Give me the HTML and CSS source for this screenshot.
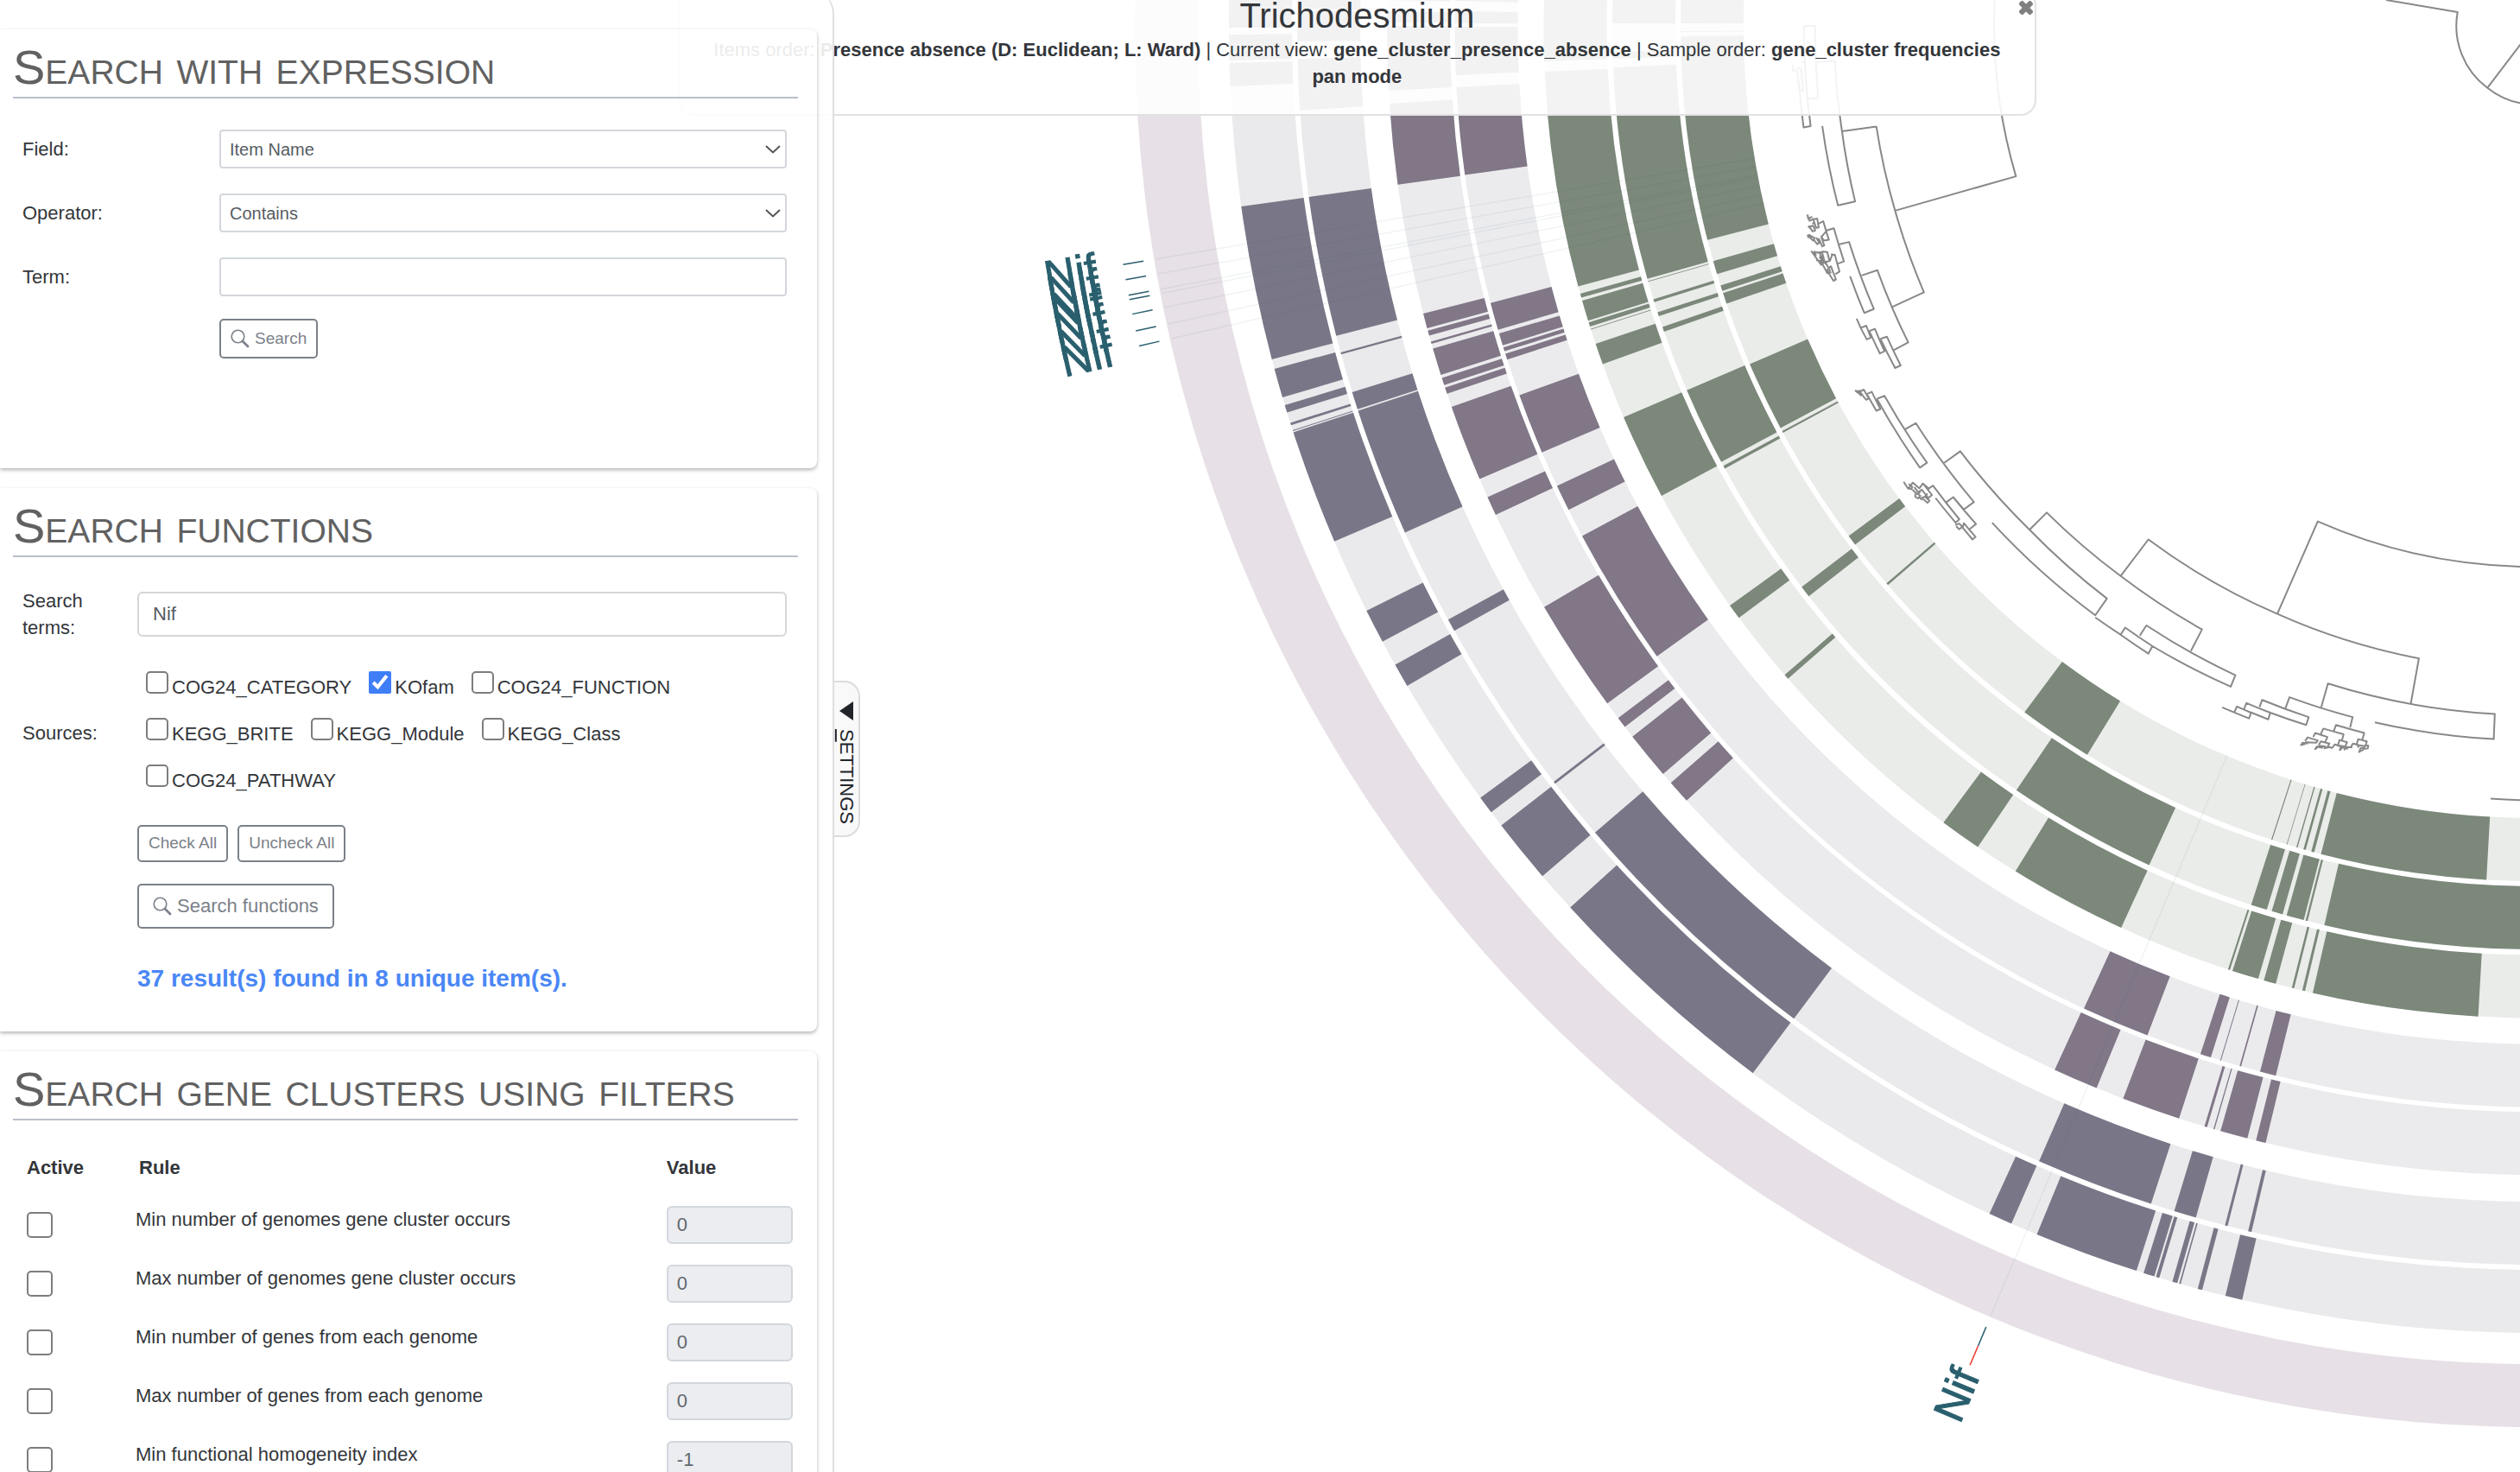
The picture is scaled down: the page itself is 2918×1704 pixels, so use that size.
FILE: index.html
```html
<!DOCTYPE html>
<html lang="en">
<head>
<meta charset="utf-8">
<meta name="viewport" content="width=device-width, initial-scale=1">
<title>Trichodesmium</title>
<link rel="stylesheet" href="styles.css">
</head>
<body>
<main class="viewer">
  <svg class="plot" id="plot" viewBox="0 0 2918 1704" preserveAspectRatio="xMinYMin slice" role="img" aria-label="Pangenome of Trichodesmium"></svg>

  <header class="title-panel">
    <button class="close" type="button" aria-label="Close title panel">
      <svg viewBox="0 0 20 20" width="20" height="20"><path d="M3 5 5 3a1 1 0 0 1 1 0l4 4 4-4a1 1 0 0 1 1 0l2 2a1 1 0 0 1 0 1l-4 4 4 4a1 1 0 0 1 0 1l-2 2a1 1 0 0 1-1 0l-4-4-4 4a1 1 0 0 1-1 0l-2-2a1 1 0 0 1 0-1l4-4-4-4a1 1 0 0 1 0-1z" fill="#808080" stroke="#808080" stroke-width="2"/></svg>
    </button>
    <h1>Trichodesmium</h1>
    <p>Items order: <b>Presence absence (D: Euclidean; L: Ward)</b> | Current view: <b>gene_cluster_presence_absence</b> | Sample order: <b>gene_cluster frequencies pan mode</b></p>
  </header>

  <aside class="sidebar">
    <section class="card">
      <h2>Search with expression</h2>
      <form class="form form-expression">
        <label for="field">Field:</label>
        <div class="select">
          <select id="field"><option>Item Name</option></select>
          <svg class="chevron" viewBox="0 0 18 10"><path d="M1 1l8 7.500 8-7.500" fill="none" stroke="#555" stroke-width="2"/></svg>
        </div>
        <label for="operator">Operator:</label>
        <div class="select">
          <select id="operator"><option>Contains</option></select>
          <svg class="chevron" viewBox="0 0 18 10"><path d="M1 1l8 7.500 8-7.500" fill="none" stroke="#555" stroke-width="2"/></svg>
        </div>
        <label for="term">Term:</label>
        <input class="text-small" id="term" type="text">
        <div class="actions">
          <button class="btn btn-search" type="button">
            <svg class="lens" viewBox="0 0 22 22"><circle cx="8.500" cy="8.500" r="7.300" fill="none" stroke="currentColor" stroke-width="1.600"/><path d="M14 14l6 6" stroke="currentColor" stroke-width="2.800" stroke-linecap="round"/></svg>
            Search
          </button>
        </div>
      </form>
    </section>

    <section class="card">
      <h2>Search functions</h2>
      <form class="form form-functions">
        <label for="terms">Search terms:</label>
        <input class="text-large" id="terms" type="text" value="Nif">
        <span id="sources-label">Sources:</span>
        <div class="sources" role="group" aria-labelledby="sources-label">
          <label><input type="checkbox"><span>COG24_CATEGORY</span></label>
          <label><input type="checkbox" checked><span>KOfam</span></label>
          <label><input type="checkbox"><span>COG24_FUNCTION</span></label>
          <label><input type="checkbox"><span>KEGG_BRITE</span></label>
          <label><input type="checkbox"><span>KEGG_Module</span></label>
          <label><input type="checkbox"><span>KEGG_Class</span></label>
          <label><input type="checkbox"><span>COG24_PATHWAY</span></label>
        </div>
        <div class="results">
          <div class="pair">
            <button class="btn btn-mini" type="button">Check All</button>
            <button class="btn btn-mini" type="button">Uncheck All</button>
          </div>
          <button class="btn btn-wide" type="button">
            <svg class="lens" viewBox="0 0 22 22"><circle cx="8.500" cy="8.500" r="7.300" fill="none" stroke="currentColor" stroke-width="1.600"/><path d="M14 14l6 6" stroke="currentColor" stroke-width="2.800" stroke-linecap="round"/></svg>
            Search functions
          </button>
          <p class="found">37 result(s) found in 8 unique item(s).</p>
        </div>
      </form>
    </section>

    <section class="card">
      <h2>Search gene clusters using filters</h2>
      <table class="filters">
        <thead><tr><th class="col-active">Active</th><th class="col-rule">Rule</th><th class="col-value">Value</th></tr></thead>
        <tbody>
          <tr><td><input type="checkbox" id="f1"></td><td><label for="f1">Min number of genomes gene cluster occurs</label></td><td><input type="text" value="0" aria-label="Min number of genomes" disabled></td></tr>
          <tr><td><input type="checkbox" id="f2"></td><td><label for="f2">Max number of genomes gene cluster occurs</label></td><td><input type="text" value="0" aria-label="Max number of genomes" disabled></td></tr>
          <tr><td><input type="checkbox" id="f3"></td><td><label for="f3">Min number of genes from each genome</label></td><td><input type="text" value="0" aria-label="Min number of genes" disabled></td></tr>
          <tr><td><input type="checkbox" id="f4"></td><td><label for="f4">Max number of genes from each genome</label></td><td><input type="text" value="0" aria-label="Max number of genes" disabled></td></tr>
          <tr><td><input type="checkbox" id="f5"></td><td><label for="f5">Min functional homogeneity index</label></td><td><input type="text" value="-1" aria-label="Min functional homogeneity" disabled></td></tr>
        </tbody>
      </table>
    </section>
  </aside>

  <button class="settings-tab" type="button">
    <svg viewBox="0 0 16 22" width="16" height="22"><path d="M16 0v22L0 11z" fill="#212529"/></svg>
    <span><u>S</u>ETTINGS</span>
  </button>
</main>
<script src="plot.js"></script>
</body>
</html>
```

FILE: styles.css
```css
* {
  box-sizing: border-box;
}

body {
  margin: 0;
  background: #fff;
  color: #33363a;
  font: 22px/31px "Liberation Sans", Arial, sans-serif;
}

.viewer {
  position: relative;
  height: 100vh;
  overflow: hidden;
}

.plot {
  display: block;
  width: 100%;
  height: 100%;
}

.plot .tree {
  fill: none;
  stroke: #888;
  stroke-width: 2;
  stroke-linejoin: round;
}

.plot .mark {
  fill: #2a5f6e;
  stroke: #2a5f6e;
  stroke-width: 1;
  font-size: 50px;
}

/* Title panel */
.title-panel {
  position: absolute;
  top: -12px;
  left: 26.9%;
  width: 53.9%;
  padding: 4px 24px 28px;
  border: 2px solid #e2e2e2;
  border-radius: 18px;
  background: rgba(255, 255, 255, 0.9);
  background-clip: padding-box;
  text-align: center;
}

.title-panel h1 {
  margin: 0;
  font-size: 40px;
  font-weight: 400;
  line-height: 48px;
}

.title-panel p {
  margin: 0;
}

.close {
  position: absolute;
  top: 9px;
  right: 0;
  padding: 0;
  border: 0;
  background: none;
}

.close svg {
  display: block;
}

/* Sidebar */
.sidebar {
  position: absolute;
  top: -12px;
  bottom: 0;
  left: 0;
  width: 33.1%;
  padding: 46px 18px 0 0;
  overflow: hidden;
  border-right: 2px solid #dfdfdf;
  border-top-right-radius: 28px;
  background: rgba(255, 255, 255, 0.9);
}

.card {
  margin-bottom: 23px;
  overflow: hidden;
  border-radius: 0 8px 8px 0;
  box-shadow: 0 2px 4px rgba(0, 0, 0, 0.3);
}

.card h2 {
  margin: 12px 22px 0 15px;
  padding-bottom: 2px;
  border-bottom: 2px solid #bbbfcb;
  color: #616161;
  font-size: 56px;
  font-weight: 400;
  font-variant: small-caps;
  line-height: 64px;
  white-space: nowrap;
}

.form {
  display: grid;
  align-items: center;
  padding: 36px 35px 127px 26px;
}

.form-expression {
  grid-template-columns: 228px 1fr;
  row-gap: 29px;
}

.form-functions {
  grid-template-columns: 133px 1fr;
  row-gap: 35px;
  padding-top: 35px;
  padding-bottom: 45px;
}

.select {
  display: grid;
}

.select select,
.chevron {
  grid-area: 1 / 1;
}

.chevron {
  align-self: center;
  justify-self: end;
  width: 18px;
  height: 10px;
  margin-right: 7px;
  pointer-events: none;
}

.select select,
.text-small,
.text-large {
  width: 100%;
  height: 45px;
  padding: 0 10px;
  border: 2px solid #d3d7db;
  border-radius: 4px;
  background: transparent;
  color: #565c62;
  font: 20px "Liberation Sans", Arial, sans-serif;
  appearance: none;
}

.text-large {
  height: 52px;
  padding: 0 16px;
  border-color: #d4d6d8;
  border-radius: 6px;
  font-size: 22px;
}

.actions,
.results {
  grid-column: 2;
}

.btn {
  display: flex;
  align-items: center;
  gap: 6px;
  border: 2px solid #7b8189;
  border-radius: 5px;
  background: transparent;
  color: #7b8189;
  font: 19px "Liberation Sans", Arial, sans-serif;
}

.btn-search {
  height: 46px;
  margin-top: -3px;
  padding: 0 11px;
}

.btn-mini {
  height: 43px;
  padding: 0 11px 2px;
}

.btn-wide {
  height: 52px;
  margin-top: 25px;
  padding: 0 16px;
  font-size: 22px;
}

.lens {
  width: 22px;
  height: 22px;
}

.pair {
  display: flex;
  gap: 11px;
}

.sources {
  display: flex;
  flex-wrap: wrap;
  gap: 19px 20px;
  padding-left: 10px;
}

.sources label {
  display: flex;
  gap: 4px;
}

.sources span {
  margin-top: 3px;
  line-height: 32px;
}

.sources input {
  width: 26px;
  height: 26px;
  margin: 0;
}

input[type="checkbox"] {
  accent-color: #3f7ef7;
}

input[type="checkbox"]:not(:checked) {
  border: 2px solid #7d7d7d;
  border-radius: 5px;
  background: #fff;
  appearance: none;
}

.found {
  margin: 42px 0 0;
  color: #4a87f6;
  font-size: 28px;
  font-weight: 700;
  line-height: 32px;
}

/* Filters table */
.filters {
  width: calc(100% - 59px);
  margin: 39px 28px 0 31px;
  border-collapse: collapse;
  table-layout: fixed;
}

.filters th {
  height: 48px;
  padding: 0;
  text-align: left;
  vertical-align: top;
}

.col-active {
  width: 126px;
}

.filters .col-rule {
  padding-left: 4px;
}

.col-value {
  width: 146px;
}

.filters td {
  height: 68px;
  padding: 12px 0 0;
  vertical-align: top;
}

.filters input[type="checkbox"] {
  display: block;
  width: 30px;
  height: 30px;
  margin: 7px 0 0;
}

.filters input[type="text"] {
  display: block;
  width: 100%;
  height: 44px;
  padding: 0 10px;
  border: 2px solid #d2d7dc;
  border-radius: 6px;
  background: #ebedf1;
  color: #62676c;
  font: 22px "Liberation Sans", Arial, sans-serif;
}

.settings-tab {
  position: absolute;
  top: 788px;
  left: 33.1%;
  display: flex;
  flex-direction: column;
  align-items: center;
  gap: 10px;
  width: 30px;
  height: 181px;
  padding: 22px 0 0;
  border: 2px solid #dcdcdc;
  border-left: 0;
  border-radius: 0 18px 18px 0;
  background: #f9f9f9;
  color: #212529;
  font: 22px "Liberation Sans", Arial, sans-serif;
}

.settings-tab span {
  writing-mode: vertical-rl;
}
```

FILE: plot.js
```js
const NS = 'http://www.w3.org/2000/svg';
const plot = document.getElementById('plot');
const CX = 2934.5, CY = 31.5;

function add(name, attrs, text) {
  const node = document.createElementNS(NS, name);
  for (const key in attrs) node.setAttribute(key, attrs[key]);
  if (text) node.textContent = text;
  plot.appendChild(node);
}

// Angles grow from the left horizontal down to the vertical below the centre.
const at = (r, a) => (CX - r * Math.cos(a)).toFixed(2) + ' ' + (CY + r * Math.sin(a)).toFixed(2);

function sector(outer, inner, a0, a1, fill) {
  add('path', {
    fill,
    d: `M${at(outer, a0)}A${outer} ${outer} 0 0 0 ${at(outer, a1)}L${at(inner, a1)}A${inner} ${inner} 0 0 1 ${at(inner, a0)}Z`
  });
}

const SLATE = ['#797787', '#eaeaec'], PLUM = ['#817787', '#ebebee'], GREEN = ['#7b887a', '#eaece9'];

// side: spans as y values on the outer edge; base: spans as x values on the outer edge
const rings = [
  { r: [1511.500, 1438.500], c: SLATE,
    side: [[-30, 32], [40, 70], [73, 100], [239, 416], [427, 460], [469, 477.5], [489.5, 492.3], [498, 499], [500.4, 626.7], [707, 742.8], [769.6, 794], [923.4, 940.2], [955.5, 1014.2], [1050.6, 1242.3]],
    base: [[2303.6, 2329.1], [2358.5, 2473.9], [2482.1, 2494.5], [2496.5, 2500.3], [2515.4, 2521.1], [2523.4, 2525], [2544.8, 2550], [2576.8, 2596.3]] },
  { r: [1432.500, 1359.500], c: SLATE,
    side: [[-30, 10], [12, 48], [68, 128], [228, 388.7], [408, 410.2], [453.9, 473.8], [475.4, 616.4], [717.3, 730.3], [904.9, 907.3], [963.8, 1179.2]],
    base: [[2361.1, 2490.8], [2517.6, 2542.7], [2576.4, 2579.4], [2603.2, 2607.1]] },
  { r: [1328.500, 1255.500], c: PLUM,
    side: [[-30, 0], [13, 26], [30, 105], [120, 213.7], [363.1, 380], [382.8, 388.6], [395.5, 398], [403.6, 433.9], [437.5, 445.7], [448.7, 455.8], [471, 554.5], [575.4, 596], [702.7, 814.3], [831.2, 841.5], [852.7, 896], [906.3, 926.8]],
    base: [[2379.2, 2427.7], [2458.4, 2523.2], [2552.6, 2555.6], [2563, 2564.3], [2571.2, 2602.3], [2612.3, 2623.5]] },
  { r: [1250, 1177], c: PLUM,
    side: [[-30, 1], [13, 27], [31, 87], [101, 202.6], [350.7, 381.8], [386.1, 399.8], [402.2, 406.6], [409.6, 416.2], [457.6, 523.7], [562.5, 590.2], [620.5, 759.8]],
    base: [[2413, 2486.5], [2547.9, 2560], [2570.8, 2571.8], [2593.3, 2595], [2617, 2635.2]] },
  { r: [1147, 1074], c: GREEN,
    side: [[-30, 71], [83, 331.5], [340, 344.6], [348, 371.2], [373.2, 378], [380.7, 381.6], [398, 421.5], [483, 574.1], [700.9, 715.2], [781.3, 785.7]],
    base: [[2250.4, 2290.2], [2333.8, 2456.2], [2579.9, 2582], [2585, 2614.9], [2621.4, 2635.2], [2653.8, 2656.4], [2665.9, 2669], [2678, 2869.6]] },
  { r: [1067.500, 994.500], c: GREEN,
    side: [[-30, 27], [60, 68], [78, 322.8], [325.4, 326.2], [346.4, 349.7], [361.6, 366], [378.6, 383.9], [451.8, 534.8], [539.3, 542.4], [679.5, 690.2]],
    base: [[2334.8, 2488.6], [2606.7, 2624.8], [2630.5, 2643], [2647.8, 2667.6], [2669.7, 2672], [2691.4, 2933]] },
  { r: [988.500, 915.500], c: GREEN,
    side: [[-30, 27], [36, 37], [42, 277.7], [302.3, 317.3], [330.4, 336.7], [339.3, 351.5], [421.4, 495.5], [499.1, 500.9], [620.5, 630.4], [675.3, 677.3]],
    base: [[2344.3, 2416.9], [2630, 2631.2], [2647.7, 2648.4], [2659, 2660.4], [2667.2, 2669.8], [2676.3, 2679.7], [2687.5, 2879.1]] }
];

sector(1620.500, 1547.500, -0.1, 1.65, '#e7e0e6');
for (const { r: [outer, inner], c, side, base } of rings) {
  sector(outer, inner, -0.1, 1.65, c[1]);
  for (const [y0, y1] of side) {
    sector(outer, inner, Math.asin((y0 - CY) / outer), Math.asin((y1 - CY) / outer), c[0]);
  }
  for (const [x0, x1] of base) {
    sector(outer, inner, Math.acos((CX - x0) / outer), Math.acos((CX - x1) / outer), c[0]);
  }
}

// Search hits: a faint ray through the rings, a tick outside them and a label
const line = (r0, r1, a, stroke, opacity) =>
  add('path', { d: `M${at(r0, a)}L${at(r1, a)}`, stroke, 'stroke-width': 1.5, 'stroke-opacity': opacity });

const hits = [300, 317, 334.7, 339.6, 356, 375, 392, 1523.2];
hits.forEach((y, i) => {
  const a = Math.asin((y - CY) / 1619);
  line(915, 1619, a, '#2a5f6e', 0.07);
  line(1633, 1657, a, '#2a5f6e', 1);
  if (i === hits.length - 1) line(1657, 1681, a, '#f03a2e', 1);
  const [x, yy] = at(1688, a).split(' ');
  add('text', { class: 'mark', x: 0, y: 16, 'text-anchor': 'end', transform: `translate(${x} ${yy}) rotate(${-a * 180 / Math.PI})` }, 'Nif');
});

// Dendrogram. M moves, L draws a straight branch, O follows the circle through the previous point.
function tree(source, map) {
  let d = '', prev;
  for (const [, op, sx, sy] of source.matchAll(/([MLO])?\s*(-?[\d.]+) (-?[\d.]+)/g)) {
    const cmd = op || 'L';
    const p = map(+sx, +sy);
    if (cmd === 'O') {
      const r = (Math.hypot(p[0] - CX, p[1] - CY) + Math.hypot(prev[0] - CX, prev[1] - CY)) / 2;
      const cross = (prev[0] - CX) * (p[1] - CY) - (prev[1] - CY) * (p[0] - CX);
      d += `A${r.toFixed(1)} ${r.toFixed(1)} 0 0 ${cross > 0 ? 1 : 0} ${p[0].toFixed(1)} ${p[1].toFixed(1)}`;
    } else {
      d += `${cmd}${p[0].toFixed(1)} ${p[1].toFixed(1)}`;
    }
    prev = p;
  }
  add('path', { class: 'tree', d });
}

tree('M2763 0 2845.700 14 O2880.300 101.700 O2934 121 M2880.300 101.700 2925 43 M2884 924.500 O2930 926.500', (x, y) => [x, y]);

tree(`M529 -200 O571 204 L332 282 M295 91 O332 282 O389 467 L327 500 M227 102 L295 91
M178 -55 L213 -58 O227 102 O253 261 L219 270 O188 90
M152 -137 L174 -137 O180 26 L160 28 M152 -137 O165 90 L151 93 O142 -10
M130 -50 L130 -35 138 -36 143 10 150 9 146 -40 138 -41 M146 -55 L152 -55
M266 429 L297 417 O358 581 L330 598
M222 358 L241 353 O290 505 L271 514 O243 431
M197 327 L211 322 O231 397 L219 402
M180 312 L190 306 O201 348 L192 350
M158 291 O163 305 L170 301 O176 321 L181 320 O178 300 L170 302 M168 311 L172 310 M159 291 L160 300 168 296 M161 316 L169 329 174 327 170 316 161 319 166 323
M158 337 O170 350 L173 344 162 337 160 342 168 343 M170 346 O178 358 L182 355 176 343 M178 350 L181 346 188 363 192 361 186 342 O197 327 M192 350 O186 342
M205 381 L213 382 O222 420 L214 426 M196 415 O210 441 L215 438 O205 408 L198 415 M200 424 L206 422
M166 373 L186 405 191 400 182 377 188 378 193 400 M168 378 L180 376 M172 373 L176 384 M178 378 L190 375 198 376 202 396 194 399 M176 394 L192 398 M182 387 L196 404 M186 398 L198 424 203 418 194 398 203 396 208 381 M189 381 L184 400
M256 527 O264 548 L275 543 O284 570 L276 574 O264 548 M281 555 L292 550 O311 601 L302 606 O281 555 M303 573 L316 568 O343 633 L332 639 O303 573
M253 690 L262 693 270 688 O280 708 L275 711 O262 693 M253 690 L258 695 263 689 M259 694 L264 701 267 696 M276 698 L286 693 O303 732 L295 736 O276 698 M296 709 L311 702 O395 854 L381 865 O296 709 M352 778 L373 764 O488 943 L468 960
M428 855 L461 828 O598 1006 O751 1162 L728 1200 O524 990
M598 1006 L632 967 O778 1111 O939 1232 L917 1281
M778 1111 L833 1028 O1088 1197 O1368 1298 L1352 1400
M1088 1197 L1168 987 O1600 1090
M728 1205 O778 1244 O833 1287 L841 1270 O787 1228 L778 1244 M816 1246 L829 1223 O1005 1336 L996 1362 O841 1270
M1175 1408 L1188 1355 O1518 1424 L1516 1481 O1281 1443
M979 1409 O1032 1434 L1036 1421 O1008 1407 L1003 1420 M1022 1413 L1027 1399 O1074 1421 L1070 1436 O1035 1420 M1053 1408 L1058 1392 O1150 1431 L1145 1449 O1074 1421 M1104 1411 L1112 1386 O1237 1431 L1232 1455
M1199 1465 L1204 1449 O1260 1467 L1256 1482 M1174 1469 L1179 1457 O1219 1470 L1216 1484
M1159 1476 L1163 1467 O1187 1476 L1183 1487 M1143 1485 L1148 1477 1168 1484 1165 1489 1143 1488 M1134 1496 L1138 1489 1147 1491 1145 1487 M1136 1494 L1143 1492
M1170 1494 L1174 1486 1191 1491 1187 1499 M1162 1505 L1166 1498 1178 1501 M1164 1503 L1171 1496 1183 1498 1180 1502 M1180 1502 L1192 1499 1197 1502
M1208 1494 L1211 1483 1226 1488 1222 1498 1207 1495 M1197 1500 L1202 1493 1214 1498 1211 1507 M1211 1507 L1217 1500 1228 1503 M1220 1506 L1225 1499 1236 1500
M1245 1492 L1248 1481 1265 1486 1262 1497 1244 1494 M1233 1499 L1238 1491 1250 1495 1247 1500 M1249 1512 L1253 1501 1261 1503 1267 1502 1268 1496 1262 1495 M1251 1509 L1257 1506 1261 1496
M399 912 L407 906 O459 982 L452 990 O412 934 M433 944 L447 932 O492 993 L480 1004 M468 960 L447 932
M349 897 O358 913 L367 899 380 912 387 901 400 914 M387 901 L405 927 398 934 385 915 378 921 370 909 M355 904 L352 905 M359 902 L366 909 364 914 357 911 M366 915 L376 925 382 920 M372 924 L372 931 377 935 382 929 376 924 M384 934 L391 931 400 940 396 945 387 936 M380 933 L386 938 M396 924 L391 931
M466 1000 L468 991 O491 1022 L485 1028 O464 999 M451 995 L459 992 465 999 459 1005 453 998`,
  (x, y) => [2000 + x / 1.708, 100 + y / 1.96]);
```
